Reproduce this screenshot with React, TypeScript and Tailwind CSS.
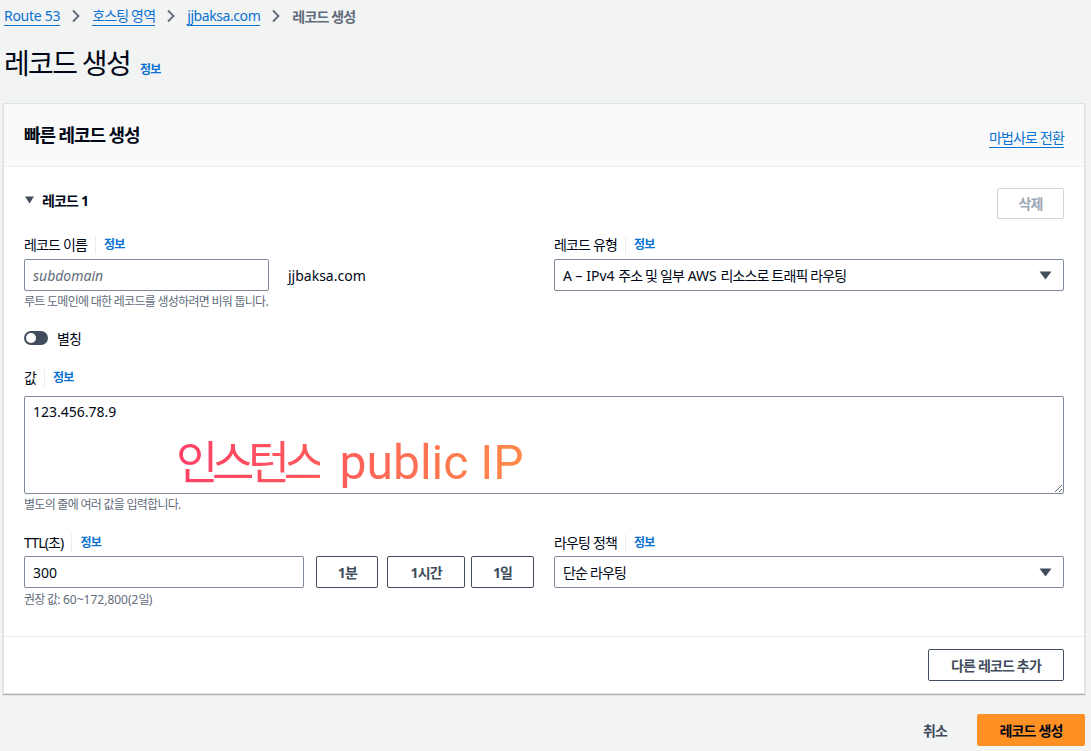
import React from "react";

const KO = "tracking-[-0.06em]";

function Info() {
  return (
    <span className="ml-2 flex items-center">
      <span className="mr-2 h-[18px] w-px bg-[#e9ebed]" />
      <span className={`text-[12px] font-bold text-[#0972d3] ${KO}`}>정보</span>
    </span>
  );
}

function Label({ children }: { children: React.ReactNode }) {
  return (
    <div className="flex h-[20px] items-center text-[14px] leading-[20px] text-[#000716]">
      <span className={KO}>{children}</span>
      <Info />
    </div>
  );
}

function Caret() {
  return (
    <svg width="13" height="9" viewBox="0 0 13 9" className="shrink-0">
      <path d="M0.5 0.5 L12.5 0.5 L6.5 8.5 Z" fill="#414d5c" />
    </svg>
  );
}

function Select({ children }: { children: React.ReactNode }) {
  return (
    <div className="flex h-[32px] items-center justify-between rounded-[2px] border border-[#7d8998] bg-white pl-[8px] pr-[11px] text-[14px] text-[#000716]">
      <span>{children}</span>
      <Caret />
    </div>
  );
}

function Chevron() {
  return (
    <svg width="10" height="14" viewBox="0 0 10 14" className="mx-[11px]">
      <path d="M2 1.5 L7.5 7 L2 12.5" fill="none" stroke="#5f6b7a" strokeWidth="1.8" />
    </svg>
  );
}

export default function App() {
  return (
    <div className="min-h-screen w-[1091px] bg-[#f2f3f3] font-['Noto_Sans','Noto_Sans_CJK_KR',sans-serif] text-[#000716]">
      {/* breadcrumb */}
      <div className="flex h-[32px] items-center pl-[4px] text-[14px]">
        <a className="border-b border-[#0972d3] leading-[18px] tracking-[-0.02em] text-[#0972d3]">Route 53</a>
        <Chevron />
        <a className={`border-b border-[#0972d3] leading-[18px] text-[#0972d3] ${KO}`}>호스팅 영역</a>
        <Chevron />
        <a className="border-b border-[#0972d3] leading-[18px] tracking-[-0.03em] text-[#0972d3]">jjbaksa.com</a>
        <Chevron />
        <span className={`font-bold text-[#5f6b7a] ${KO}`}>레코드 생성</span>
      </div>

      {/* title */}
      <div className="mb-[25px] mt-[16px] flex h-[30px] items-center pl-[4px]">
        <h1 className={`text-[28px] font-normal leading-[30px] text-[#000716] ${KO}`}>레코드 생성</h1>
        <span className={`ml-[10px] mt-[14px] text-[12px] font-bold text-[#0972d3] ${KO}`}>정보</span>
      </div>

      {/* card */}
      <div className="ml-[3px] w-[1082px] border border-[#e0e3e6] bg-white shadow-[0_1px_1px_0_rgba(0,28,36,0.3)]">
        <div className="flex h-[63px] items-center justify-between border-b border-[#e9ebed] bg-[#fafafa] px-[20px]">
          <h2 className={`text-[18px] font-bold leading-[22px] ${KO}`}>빠른 레코드 생성</h2>
          <a className={`mt-[6px] border-b border-[#0972d3] text-[14px] leading-[18px] text-[#0972d3] ${KO}`}>마법사로 전환</a>
        </div>

        <div className="px-[20px] pb-[28px] pt-[21px]">
          <div className="flex items-start justify-between">
            <div className="flex h-[23px] items-center gap-[8px] pl-[1px] pt-[1px]">
              <svg width="9" height="8" viewBox="0 0 9 8">
                <path d="M0 0.5 L9 0.5 L4.5 7.5 Z" fill="#414d5c" />
              </svg>
              <span className={`text-[14px] font-bold ${KO}`}>레코드 1</span>
            </div>
            <button className={`h-[31px] w-[67px] rounded-[2px] border border-[#d1d5db] bg-white text-[14px] font-bold text-[#9ba7b6] ${KO}`}>
              삭제
            </button>
          </div>

          <div className="mt-[16px] grid grid-cols-2 gap-x-[20px]">
            <div>
              <Label>레코드 이름</Label>
              <div className="mt-[4px] flex items-center">
                <input
                  className="h-[32px] w-[245px] rounded-[2px] border border-[#7d8998] px-[8px] text-[14px] placeholder:italic placeholder:text-[#5f6b7a]"
                  placeholder="subdomain"
                />
                <span className="ml-[19px] text-[14px]">jjbaksa.com</span>
              </div>
              <div className={`mt-[3px] text-[12px] leading-[16px] text-[#5f6b7a] ${KO}`}>
                루트 도메인에 대한 레코드를 생성하려면 비워 둡니다.
              </div>
            </div>
            <div>
              <Label>레코드 유형</Label>
              <div className="mt-[4px]">
                <Select>
                  A – IPv4 <span className={KO}>주소 및 일부</span> AWS <span className={KO}>리소스로 트래픽 라우팅</span>
                </Select>
              </div>
            </div>
          </div>

          <div className="mt-[18px] flex h-[20px] items-center">
            <span className="relative h-[14px] w-[24px] rounded-full bg-[#414d5c]">
              <span className="absolute left-[2px] top-[2px] h-[10px] w-[10px] rounded-full bg-white" />
            </span>
            <span className={`ml-[9px] text-[14px] ${KO}`}>별칭</span>
          </div>

          <div className="mt-[20px]">
            <Label>값</Label>
          </div>
          <div className="relative mt-[8px]">
            <textarea
              className="block h-[98px] w-full resize-y rounded-[2px] border border-[#7d8998] px-[8px] py-[4px] text-[14px] leading-[22px] text-[#000716]"
              defaultValue="123.456.78.9"
            />
            <div className="pointer-events-none absolute left-[152px] top-[42px] flex items-baseline whitespace-nowrap font-['Roboto','Noto_Sans_CJK_KR',sans-serif] leading-[50px]">
              <span className="bg-linear-to-r from-[#ff3f66] to-[#ff5a5c] bg-clip-text text-[46px] tracking-[-0.14em] text-transparent">인스턴스</span>
              <span className="ml-[20px] bg-linear-to-r from-[#ff5e5a] to-[#ff8a48] bg-clip-text text-[48px] text-transparent">public IP</span>
            </div>
          </div>
          <div className={`mt-[3px] text-[12px] leading-[16px] text-[#5f6b7a] ${KO}`}>별도의 줄에 여러 값을 입력합니다.</div>

          <div className="mt-[20px] grid grid-cols-2 gap-x-[20px]">
            <div>
              <Label>TTL(초)</Label>
              <div className="mt-[3px] flex items-center">
                <input
                  className="h-[32px] w-[281px] rounded-[2px] border border-[#7d8998] px-[8px] text-[14px]"
                  defaultValue="300"
                />
                <button className={`ml-[12px] h-[32px] w-[62px] rounded-[2px] border border-[#414d5c] bg-white text-[14px] font-bold text-[#414d5c] ${KO}`}>1분</button>
                <button className={`ml-[9px] h-[32px] w-[78px] rounded-[2px] border border-[#414d5c] bg-white text-[14px] font-bold text-[#414d5c] ${KO}`}>1시간</button>
                <button className={`ml-[6px] h-[32px] w-[63px] rounded-[2px] border border-[#414d5c] bg-white text-[14px] font-bold text-[#414d5c] ${KO}`}>1일</button>
              </div>
              <div className="mt-[4px] text-[12px] leading-[16px] text-[#5f6b7a]">
                <span className={KO}>권장 값:</span> 60~172,800(2<span className={KO}>일</span>)
              </div>
            </div>
            <div>
              <Label>라우팅 정책</Label>
              <div className="mt-[3px]">
                <Select>
                  <span className={KO}>단순 라우팅</span>
                </Select>
              </div>
            </div>
          </div>
        </div>

        <div className="flex justify-end border-t border-[#e9ebed] px-[20px] py-[12px]">
          <button className={`h-[32px] w-[136px] rounded-[2px] border border-[#414d5c] bg-white text-[14px] font-bold text-[#414d5c] ${KO}`}>
            다른 레코드 추가
          </button>
        </div>
      </div>

      <div className="mt-[20px] flex items-center justify-end pr-[6px]">
        <span className={`mr-[30px] text-[14px] font-bold text-[#414d5c] ${KO}`}>취소</span>
        <button className={`h-[32px] w-[108px] rounded-[2px] bg-[#ff9124] text-[14px] font-bold text-[#000716] ${KO}`}>
          레코드 생성
        </button>
      </div>
    </div>
  );
}
